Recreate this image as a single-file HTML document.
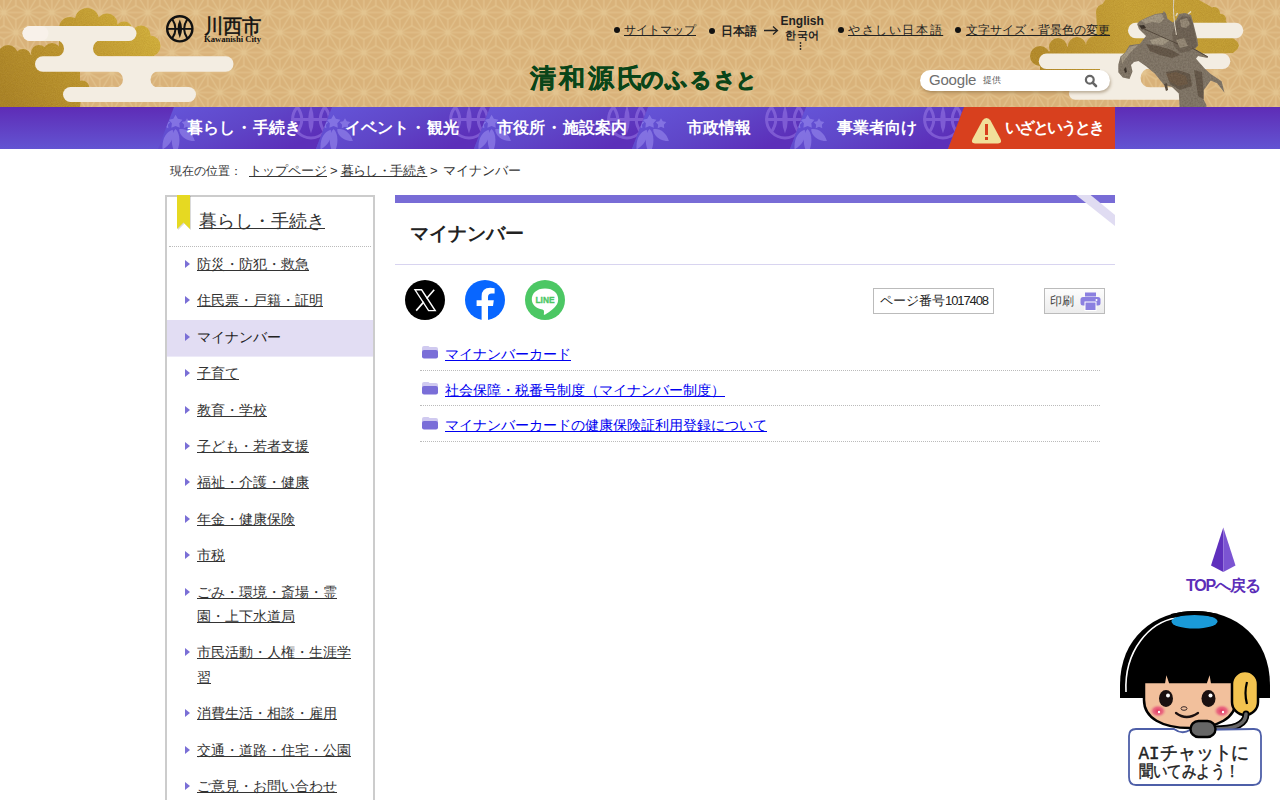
<!DOCTYPE html>
<html lang="ja"><head><meta charset="utf-8"><title>マイナンバー｜川西市</title>
<style>
*{box-sizing:border-box}
html,body{margin:0;padding:0;width:1280px;height:800px;overflow:hidden;background:#fff}
body{font-family:"Liberation Sans",sans-serif;color:#222;position:relative}
.abs{position:absolute}
a{color:inherit}
#hdr{position:absolute;left:0;top:0;width:1280px;height:107px;background:#dcb67e;overflow:hidden}
#nav{position:absolute;left:0;top:107px;width:1280px;height:42px;background:linear-gradient(180deg,#5e2cb6,#6454d2);overflow:hidden}
.ni{position:absolute;top:0;height:42px;color:#fff;font-weight:bold;font-size:16px;line-height:42px;white-space:nowrap}
#crumb{position:absolute;left:170px;top:162px;font-size:13px;line-height:18px;color:#333;white-space:nowrap}
#crumb a{color:#333}
#side{position:absolute;left:165px;top:195px;width:210px;height:640px;border:2px solid #ccc;background:#fff}
#side .ttl{position:absolute;left:32px;top:11px;font-size:18px;line-height:26px;color:#333;text-decoration:underline}
#side .rib{position:absolute;left:9px;top:-2px;width:13px;height:34px;background:#e6d820}
#side .dots{position:absolute;left:2px;right:2px;top:49px;border-top:1px dotted #bbb}
#side ul{list-style:none;margin:0;padding:0;position:absolute;left:0;top:49px;width:206px}
#side li{position:relative;padding:6px 10px 6px 30px;font-size:14px;line-height:24.4px}
#side li:before{content:"";position:absolute;left:18px;top:14px;border-left:5px solid #7a6fd6;border-top:4.5px solid transparent;border-bottom:4.5px solid transparent}
#side li a{color:#333}
#side li.cur{background:linear-gradient(to bottom,transparent 1px,#e2ddf3 1px);box-shadow:0 1.6px 0 #e2ddf3}
#main{position:absolute;left:395px;top:195px;width:720px}
.folder{position:absolute;left:27px;width:16px;height:13px}
.lk{position:absolute;left:50px;font-size:14px;line-height:20px;color:#0000f0;white-space:nowrap}
.lk a{color:#0000f0}
.dl{position:absolute;left:25px;width:680px;border-top:1px dotted #bbb}
.bul{position:absolute;width:6px;height:6px;border-radius:50%;background:#111}
.tl{position:absolute;font-size:12px;line-height:16px;color:#222;white-space:nowrap}
.tl a{color:#222}
#gsearch{position:absolute;left:920px;top:70px;width:190px;height:21px;border-radius:10.5px;background:#fff;box-shadow:1px 2px 3px rgba(90,60,20,.35)}
.glogo{position:absolute;left:9px;top:1px;font-size:15px;line-height:18px;color:#6e6e6e;letter-spacing:-0.2px}
.gtk{position:absolute;left:63px;top:4px;font-size:9px;line-height:12px;color:#555}
#pgno{left:478px;top:93px;width:121px;height:26px;border:1px solid #bbb;font-size:13px;line-height:24px;padding-left:6px;color:#222;white-space:nowrap}
#prt{left:649px;top:93px;width:61px;height:26px;border:1px solid #bbb;background:linear-gradient(#fdfdfd,#ececec);font-size:12px;line-height:24px;padding-left:5px;color:#444;white-space:nowrap}
</style></head><body>
<div id="hdr">
<svg class="abs" style="left:0;top:0" width="1280" height="107" viewBox="0 0 1280 107">
<defs>
<pattern id="asa" width="24" height="40" patternUnits="userSpaceOnUse" patternTransform="translate(3.8 2.5)">
<path d="M-24 10L0 10 M-12 -10L0 10 M-12 3.33L0 10 M-12 16.67L0 10 M-12 30L0 10 M-12 30L0 23.33 M-12 30L0 36.67 M-12 30L0 50 M-12 30L12 30 M0 -3.33L0 10 M0 10L0 23.33 M0 10L12 -10 M0 10L12 3.33 M0 10L12 16.67 M0 10L12 30 M0 10L24 10 M0 23.33L12 30 M0 36.67L0 50 M0 36.67L12 30 M0 50L12 30 M12 -10L12 3.33 M12 -10L24 10 M12 3.33L24 10 M12 16.67L12 30 M12 16.67L24 10 M12 30L12 43.33 M12 30L24 10 M12 30L24 23.33 M12 30L24 36.67 M12 30L24 50 M12 30L36 30 M24 -3.33L24 10 M24 10L24 23.33 M24 10L36 -10 M24 10L36 3.33 M24 10L36 16.67 M24 10L36 30 M24 10L48 10 M24 23.33L36 30 M24 36.67L24 50 M24 36.67L36 30 M24 50L36 30" stroke="#e3c48f" stroke-width="1.1" fill="none"/>
</pattern>
<linearGradient id="goldL" gradientUnits="userSpaceOnUse" x1="150" y1="10" x2="10" y2="107">
<stop offset="0" stop-color="#d8b843"/><stop offset="0.5" stop-color="#c49e35"/><stop offset="1" stop-color="#b08a2c"/>
</linearGradient>
<linearGradient id="gold2" gradientUnits="userSpaceOnUse" x1="1030" y1="60" x2="1240" y2="0">
<stop offset="0" stop-color="#b89030"/><stop offset="0.5" stop-color="#cca83c"/><stop offset="1" stop-color="#c6a238"/>
</linearGradient>
<filter id="grain" x="0" y="0" width="100%" height="100%">
<feTurbulence type="fractalNoise" baseFrequency="1.1" numOctaves="2" seed="3" result="n"/>
<feColorMatrix in="n" type="matrix" values="0 0 0 0 0.6  0 0 0 0 0.45  0 0 0 0 0.1  0 0 0 0.5 -0.05" result="na"/>
<feComposite in="na" in2="SourceGraphic" operator="in" result="nb"/>
<feBlend in="SourceGraphic" in2="nb" mode="multiply"/>
</filter>
<filter id="hgrain" x="1100" y="0" width="140" height="110" filterUnits="userSpaceOnUse"><feTurbulence type="fractalNoise" baseFrequency="0.6" numOctaves="2" seed="7" result="n"/><feColorMatrix in="n" type="matrix" values="0 0 0 0 0.3  0 0 0 0 0.25  0 0 0 0 0.2  0 0 0 0.6 -0.1" result="na"/><feComposite in="na" in2="SourceGraphic" operator="in" result="nb"/><feBlend in="SourceGraphic" in2="nb" mode="multiply"/></filter>
<linearGradient id="horse" x1="0" y1="0" x2="0.4" y2="1">
<stop offset="0" stop-color="#8e8172"/><stop offset="0.5" stop-color="#77695a"/><stop offset="1" stop-color="#5d5042"/>
</linearGradient>
</defs>
<rect width="1280" height="107" fill="#d9b27a"/>
<rect width="1280" height="107" fill="url(#asa)"/>
<!-- left gold cloud -->
<path fill="url(#goldL)" filter="url(#grain)" d="M75 20 a12 12 0 1 1 24 0 a12 12 0 1 1 -24 0 Z M96.5 24 a10.5 10.5 0 1 1 21.0 0 a10.5 10.5 0 1 1 -21.0 0 Z M115.5 30 a8.5 8.5 0 1 1 17.0 0 a8.5 8.5 0 1 1 -17.0 0 Z M131.5 35 a9.5 9.5 0 1 1 19.0 0 a9.5 9.5 0 1 1 -19.0 0 Z M139.5 46 a10.5 10.5 0 1 1 21.0 0 a10.5 10.5 0 1 1 -21.0 0 Z M59 28 a11 11 0 1 1 22 0 a11 11 0 1 1 -22 0 Z M-2 55 a10 10 0 1 1 20 0 a10 10 0 1 1 -20 0 Z M15 57 a8 8 0 1 1 16 0 a8 8 0 1 1 -16 0 Z M31 53 a8 8 0 1 1 16 0 a8 8 0 1 1 -16 0 Z M43 52 a9 9 0 1 1 18 0 a9 9 0 1 1 -18 0 Z M74.5 88 a7.5 7.5 0 1 1 15.0 0 a7.5 7.5 0 1 1 -15.0 0 Z M70 28 L87 20 L107 24 L124 30 L141 35 L150 46 L150 56 L59 56 L59 28 Z M0 55 L8 55 L23 57 L39 53 L52 52 L61 52 L80 72 L80 88 L82 88 L80 107 L0 107 Z"/>
<!-- left white cloud -->
<g fill="#f3ede2">
<rect x="22.5" y="26" width="114" height="15" rx="7.5"/>
<rect x="35" y="56.25" width="198.5" height="15.5" rx="7.75"/>
<rect x="63" y="87" width="133" height="15" rx="7.5"/>
<path d="M55.5 40 H101.5 A7.5 7.5 0 0 0 101.5 57 H55.5 A7.5 7.5 0 0 0 55.5 40 Z"/>
<path d="M114.5 71 H159 A7.5 7.5 0 0 0 159 88 H114.5 A7.5 7.5 0 0 0 114.5 71 Z"/>
</g>
<rect x="22.5" y="26" width="26" height="15" rx="7.5" fill="#f8f1ea"/>
<!-- right gold cloud -->
<path fill="url(#gold2)" filter="url(#grain)" d="M1030 56 a10 10 0 1 1 20 0 a10 10 0 1 1 -20 0 Z M1049 47 a9 9 0 1 1 18 0 a9 9 0 1 1 -18 0 Z M1068 46 a9 9 0 1 1 18 0 a9 9 0 1 1 -18 0 Z M1086 45 a9 9 0 1 1 18 0 a9 9 0 1 1 -18 0 Z M1096 12 a8 8 0 1 1 16 0 a8 8 0 1 1 -16 0 Z M1103 5 a6 6 0 1 1 12 0 a6 6 0 1 1 -12 0 Z M1096 28 a7 7 0 1 1 14 0 a7 7 0 1 1 -14 0 Z M1103.5 77 a7.5 7.5 0 1 1 15.0 0 a7.5 7.5 0 1 1 -15.0 0 Z M1208 13 a6 6 0 1 1 12 0 a6 6 0 1 1 -12 0 Z M1216 19 a5 5 0 1 1 10 0 a5 5 0 1 1 -10 0 Z M1111 0 L1199 0 L1208 5 L1216 10 L1223 16 L1227 23 L1227 38 L1233 38 L1237.5 42 L1239 45.5 L1237.5 49 L1233 53 L1040 60 L1040 56 L1058 47 L1077 46 L1095 45 L1097 28 L1096 12 L1104 2 Z M1040 64 L1112 64 L1118 77 L1111 86 L1040 86 Z"/>
<g fill="#f3ede2">
<rect x="1128" y="22.7" width="115.3" height="15.5" rx="7.7"/>
<rect x="1038.8" y="53.5" width="191.5" height="15.4" rx="7.7"/>
<rect x="1069" y="87.3" width="128" height="12.4" rx="6.2"/>
<path d="M1100 68 H1150.5 A9.5 9.5 0 0 0 1150.5 88 H1100 Z"/>
</g>
<!-- horse statue -->
<g filter="url(#hgrain)">
<path fill="#877c6d" d="M1137.1 24 L1139.8 21 L1147.3 17.3 L1155.5 13.9 L1163 13.1 L1163.8 10.9 L1166 13.5 L1167.5 18.8 L1172.8 22.5 L1176 20 L1179 14 L1185 13 L1191 15 L1193 22 L1197.4 39.4 L1198.2 45.5 L1195 49 L1207.9 56.5 L1207.5 58 L1198 56 L1196 58.7 L1204.9 68.8 L1210.7 73.9 L1221.6 81.2 L1224.5 92.8 L1217.2 83.3 L1210.7 80.4 L1203.5 90.6 L1203.5 99.3 L1206.4 105 L1206.4 107.5 L1179.6 107.5 L1178.8 93.5 L1172 87 L1164 85 L1155 73.8 L1146 66.3 L1138.5 61 L1134 62 L1131 65 L1132.5 71.5 L1129.5 79 L1122.8 77.5 L1118.3 72.3 L1118.3 64.8 L1120.5 56.5 L1125 52.8 L1129.5 45.3 L1140 43.8 L1146 36 L1142 32 L1139 29 Z"/>
<path fill="#a99e8a" d="M1141 20.5 L1148 17.5 L1156 14.5 L1162 14 L1164 19 L1160 23 L1152 22 L1146 24 Z M1121 57 L1126 52 L1130 46.5 L1138 45 L1131 52 L1126 58 L1122 64 Z M1150 40 L1162 37 L1170 40 L1163 45 L1152 44 Z M1186 27 L1192 25 L1195 36 L1190 38 Z"/>
<path fill="#3f362d" d="M1139 25.5 L1144 25 L1146 28 L1142 29.5 Z M1124 69 L1126 67 L1127 72 L1125 73 Z"/>
<path fill="#6a5d4e" d="M1146 44 L1158 46 L1172 50 L1180 55 L1172 58 L1160 55 L1150 51 Z M1166 72 L1178 70 L1190 74 L1192 86 L1180 90 L1170 84 Z M1194 70 L1202 72 L1203.5 90.6 L1203.5 99.3 L1198 96 L1196 82 Z"/>
<path fill="#75604a" opacity="0.8" d="M1166 74 L1176 72 L1186 76 L1188 84 L1178 86 L1170 82 Z"/>
<path fill="#74685a" d="M1176 22 L1182 16 L1190 17 L1193 24 L1196 38 L1197 46 L1190 51 L1180 53 L1174 46 L1172 34 Z"/>
<path fill="#9b8f7c" d="M1180 20 L1187 18 L1190 24 L1186 28 L1181 27 Z M1176 40 L1184 38 L1188 46 L1180 48 Z"/>
<path stroke="#e6ddcb" stroke-width="1" fill="none" d="M1173.7 0 Q1172.5 14 1176.4 35"/>
<path stroke="#574b3e" stroke-width="0.9" fill="none" d="M1142 28 L1160 36 L1178 44 M1192 48 L1208 57"/>
<path stroke="#efe7d6" stroke-width="1.4" fill="none" d="M1176 16 L1177.5 13 M1188 14 L1191 11.5"/>
<path fill="#5c5043" d="M1164 84 L1167 83 L1168 90 L1166 91 Z"/>
</g>
<!-- logo -->
<g>
<circle cx="179.8" cy="28.8" r="12.6" fill="none" stroke="#111" stroke-width="2.4"/>
<path d="M166.5 28.9 H193" stroke="#111" stroke-width="1.8"/>
<path d="M179.8 19.6 Q184.3 28.8 179.8 38 Q175.3 28.8 179.8 19.6 Z" fill="#111"/>
<path d="M172.3 19.3 Q178.6 28.8 172.3 38.3 M187.3 19.3 Q181 28.8 187.3 38.3" stroke="#111" stroke-width="2" fill="none"/>
</g>
<text x="203.5" y="32.6" font-family="Liberation Serif,serif" font-size="19.5" fill="#111" stroke="#111" stroke-width="0.5" textLength="58" lengthAdjust="spacingAndGlyphs">川西市</text>
<text x="204" y="41.5" font-family="Liberation Serif,serif" font-weight="bold" font-size="8" fill="#111" textLength="57" lengthAdjust="spacingAndGlyphs">Kawanishi City</text>
<!-- calligraphy -->
<g fill="#0a4519" stroke="#0a4519" font-family="Liberation Serif,serif" font-weight="bold">
<text x="530.3" y="87" font-size="26" stroke-width="0.3">清</text>
<text x="559.4" y="87" font-size="26" stroke-width="0.3">和</text>
<text x="588.4" y="87" font-size="26" stroke-width="0.3">源</text>
<text x="616.5" y="87" font-size="26" stroke-width="0.3">氏</text>
<text x="641" y="86.5" font-size="22" stroke-width="1">の</text>
<text x="665" y="86.5" font-size="22" stroke-width="1">ふ</text>
<text x="690" y="86.5" font-size="21" stroke-width="1">る</text>
<text x="713.5" y="86.5" font-size="20.5" stroke-width="1">さ</text>
<text x="735.5" y="86.5" font-size="20" stroke-width="1">と</text>
</g>
</svg>
<div class="bul" style="left:614px;top:27px"></div>
<div class="tl" style="left:624px;top:22px"><a href="#">サイトマップ</a></div>
<div class="bul" style="left:709px;top:28px"></div>
<div class="tl" style="left:721px;top:23px;font-weight:bold">日本語</div>
<svg class="abs" style="left:763px;top:25px" width="16" height="11" viewBox="0 0 16 11"><path d="M1 5.5 H14.5 M10 1.5 L14.5 5.5 L10 9.5" stroke="#222" stroke-width="1.3" fill="none"/></svg>
<div class="tl" style="left:780.5px;top:13px;font-weight:bold;font-size:12px">English</div>
<div class="tl" style="left:785px;top:29px;font-size:10.5px;line-height:12px;letter-spacing:0.6px;font-weight:bold">한국어</div>
<svg class="abs" style="left:799px;top:42px" width="3" height="8" viewBox="0 0 3 8"><circle cx="1.5" cy="1" r="0.9" fill="#222"/><circle cx="1.5" cy="4" r="0.9" fill="#222"/><circle cx="1.5" cy="7" r="0.9" fill="#222"/></svg>
<div class="bul" style="left:838px;top:27px"></div>
<div class="tl" style="left:848px;top:22px;letter-spacing:1.6px"><a href="#">やさしい日本語</a></div>
<div class="bul" style="left:955px;top:27px"></div>
<div class="tl" style="left:966px;top:22px"><a href="#">文字サイズ・背景色の変更</a></div>
<div id="gsearch"><span class="glogo">Google</span><span class="gtk">提供</span>
<svg class="abs" style="left:164px;top:4px" width="14" height="14" viewBox="0 0 14 14"><circle cx="5.8" cy="5.8" r="3.9" fill="none" stroke="#666" stroke-width="2.2"/><path d="M8.6 8.6 L12 12" stroke="#666" stroke-width="2.6" stroke-linecap="round"/></svg></div>
</div>
<div id="nav">
<svg class="abs" style="left:0;top:0" width="1280" height="42" viewBox="0 0 1280 42">
<defs>
<linearGradient id="nbg" x1="0" y1="0" x2="0" y2="1"><stop offset="0" stop-color="#5e2cb6"/><stop offset="1" stop-color="#6354d2"/></linearGradient>
<linearGradient id="nit" x1="0" y1="0" x2="1" y2="0.5"><stop offset="0" stop-color="#6556da"/><stop offset="0.55" stop-color="#5f46c8"/><stop offset="1" stop-color="#5c2fb9"/></linearGradient>
<g id="crest" fill="#a496f4" opacity="0.5">
<path d="M0 0 C5 5 5.2 15 0 26 C-5.2 15 -5 5 0 0 Z"/>
<path d="M0 0 C5.5 5 5.5 14 0 22 C-5.5 14 -5.5 5 0 0 Z" transform="translate(-3 0.8) rotate(27) scale(0.95 1)"/>
<path d="M0 0 C5.5 5 5.5 14 0 22 C-5.5 14 -5.5 5 0 0 Z" transform="translate(3.5 0.2) rotate(-53) scale(0.95 0.9)"/>
<path d="M0.00 -14.20 L2.29 -10.16 L6.85 -9.22 L3.71 -5.79 L4.23 -1.18 L0.00 -3.10 L-4.23 -1.18 L-3.71 -5.79 L-6.85 -9.22 L-2.29 -10.16 Z"/>
<path d="M11.40 -10.80 L13.16 -7.63 L16.73 -6.93 L14.25 -4.27 L14.69 -0.67 L11.40 -2.20 L8.11 -0.67 L8.55 -4.27 L6.07 -6.93 L9.64 -7.63 Z"/>
<path d="M-10.50 -10.80 L-8.74 -7.63 L-5.17 -6.93 L-7.65 -4.27 L-7.21 -0.67 L-10.50 -2.20 L-13.79 -0.67 L-13.35 -4.27 L-15.83 -6.93 L-12.26 -7.63 Z"/>
</g>
<g id="emb" fill="none" stroke="#9a7ae6" stroke-width="3" opacity="0.55">
<circle cx="0" cy="0" r="18.4"/>
<path d="M-19.5 0 H19.5"/>
<path d="M-14 -13 Q-4.5 0 -14 13 M14 -13 Q4.5 0 14 13"/>
<path d="M0 -14 Q5.6 0 0 14 Q-5.6 0 0 -14 Z" fill="#9a7ae6" stroke="none"/>
</g>
<clipPath id="c0"><polygon points="174,0 332,0 316,42 158,42"/></clipPath><clipPath id="c1"><polygon points="332,0 490,0 474,42 316,42"/></clipPath><clipPath id="c2"><polygon points="490,0 648,0 632,42 474,42"/></clipPath><clipPath id="c3"><polygon points="648,0 806,0 790,42 632,42"/></clipPath><clipPath id="c4"><polygon points="806,0 964,0 948,42 790,42"/></clipPath></defs>
<rect width="1280" height="42" fill="url(#nbg)"/>
<polygon points="174,0 332,0 316,42 158,42" fill="url(#nit)"/>
<g clip-path="url(#c0)"><use href="#emb" x="311" y="12.5"/><use href="#crest" x="175.6" y="22"/></g>
<polygon points="332,0 490,0 474,42 316,42" fill="url(#nit)"/>
<g clip-path="url(#c1)"><use href="#emb" x="469" y="12.5"/><use href="#crest" x="333.6" y="22"/></g>
<polygon points="490,0 648,0 632,42 474,42" fill="url(#nit)"/>
<g clip-path="url(#c2)"><use href="#emb" x="627" y="12.5"/><use href="#crest" x="491.6" y="22"/></g>
<polygon points="648,0 806,0 790,42 632,42" fill="url(#nit)"/>
<g clip-path="url(#c3)"><use href="#emb" x="785" y="12.5"/><use href="#crest" x="649.6" y="22"/></g>
<polygon points="806,0 964,0 948,42 790,42" fill="url(#nit)"/>
<g clip-path="url(#c4)"><use href="#emb" x="943" y="12.5"/><use href="#crest" x="807.6" y="22"/></g>
<polygon points="964,0 1115,0 1115,42 948,42" fill="#d8401e"/>
<path d="M986.5 11 Q984 11 982.5 13.5 L972.5 32 Q970.5 36 975 36.5 L998 36.5 Q1002.5 36 1000.5 32 L990.5 13.5 Q989 11 986.5 11 Z" fill="#f1e09a"/>
<rect x="985" y="17" width="3" height="11" fill="#d8401e"/><rect x="985" y="30" width="3" height="3" fill="#d8401e"/>
</svg>
<div class="ni" style="left:187px">暮らし<span style="margin:0 1px">・</span>手続き</div>
<div class="ni" style="left:345px">イベント<span style="margin:0 1px">・</span>観光</div>
<div class="ni" style="left:497px">市役所<span style="margin:0 1px">・</span>施設案内</div>
<div class="ni" style="left:687px">市政情報</div>
<div class="ni" style="left:837px">事業者向け</div>
<div class="ni" style="left:1005px;letter-spacing:-2px">いざというとき</div>
</div><!--navend-->

<div id="crumb"><span class="abs" style="left:0;top:0;font-size:12px">現在の位置：</span><a class="abs" style="left:79px" href="#">トップページ</a><span class="abs" style="left:160px">&gt;</span><a class="abs" style="left:170.5px;letter-spacing:-0.6px" href="#">暮らし・手続き</a><span class="abs" style="left:260px">&gt;</span><span class="abs" style="left:273px">マイナンバー</span></div>

<div id="side">
  <svg class="abs" style="left:9px;top:-2px" width="16" height="36" viewBox="0 0 16 36"><polygon points="1,0 14,0 14,34 7.5,27.5 1,34" fill="#333" opacity="0.18" transform="translate(1 1)"/><polygon points="1,0 14,0 14,34 7.5,27.5 1,34" fill="#e6d922"/></svg>
  <div class="ttl">暮らし・手続き</div>
  <div class="dots"></div>
  <ul>
    <li><a href="#">防災・防犯・救急</a></li>
    <li><a href="#">住民票・戸籍・証明</a></li>
    <li class="cur">マイナンバー</li>
    <li><a href="#">子育て</a></li>
    <li><a href="#">教育・学校</a></li>
    <li><a href="#">子ども・若者支援</a></li>
    <li><a href="#">福祉・介護・健康</a></li>
    <li><a href="#">年金・健康保険</a></li>
    <li><a href="#">市税</a></li>
    <li><a href="#">ごみ・環境・斎場・霊園・上下水道局</a></li>
    <li><a href="#">市民活動・人権・生涯学習</a></li>
    <li><a href="#">消費生活・相談・雇用</a></li>
    <li><a href="#">交通・道路・住宅・公園</a></li>
    <li><a href="#">ご意見・お問い合わせ</a></li>
  </ul>
</div>

<div id="main">
  <div class="abs" style="left:0;top:0;width:720px;height:8px;background:#786cd6"></div>
  <svg class="abs" style="left:0;top:0" width="720" height="40"><polygon points="681,0 695.6,0 720,20 720,31" fill="#e0dcf2"/></svg>
  <div class="abs" style="left:15px;top:27px;font-size:19px;line-height:24px;font-weight:bold;color:#222">マイナンバー</div>
  <div class="abs" style="left:0;top:69px;width:720px;height:1px;background:#d8d4f0"></div>
  <svg class="abs" style="left:10px;top:85px" width="40" height="40" viewBox="0 0 40 40"><circle cx="20" cy="20" r="20" fill="#000"/><path d="M10 9.8 H16.6 L30.2 30.6 H23.6 Z" fill="none" stroke="#fff" stroke-width="1.4" stroke-linejoin="miter"/><path d="M29.2 9.8 L21.6 18.6 M11.2 30.6 L18.8 21.9" stroke="#fff" stroke-width="1.6"/></svg>
  <svg class="abs" style="left:70px;top:85px" width="40" height="40" viewBox="0 0 40 40"><circle cx="20" cy="20" r="20" fill="#0866ff"/><path d="M23 40 V25.9 H28 L28.8 20.2 H23 V16.9 Q23 13.4 26.5 13.4 H29.6 V8.2 Q27.3 7.8 25.2 7.8 Q16.6 7.8 16.6 16.5 V20.2 H11.6 V25.9 H16.6 V40 Z" fill="#fff"/></svg>
  <svg class="abs" style="left:130px;top:85px" width="40" height="40" viewBox="0 0 40 40"><circle cx="20" cy="20" r="20" fill="#4cc764"/><path d="M20 8.5 C11.5 8.5 6.8 13.5 6.8 19.3 C6.8 24.5 11 28.6 17.5 29.6 Q19.5 30 19 32.5 L18.8 34.2 Q18.8 35.3 20.2 34.5 Q28.8 29.6 32 24.3 Q33.2 22 33.2 19.3 C33.2 13.5 28.5 8.5 20 8.5 Z" fill="#fff"/><text x="20" y="23.2" text-anchor="middle" font-family="Liberation Sans,sans-serif" font-weight="bold" font-size="9" fill="#4cc764" stroke="#4cc764" stroke-width="0.35" textLength="19" lengthAdjust="spacingAndGlyphs">LINE</text></svg>
  <div class="abs" id="pgno">ページ番号<span style="letter-spacing:-1.1px">1017408</span></div>
  <div class="abs" id="prt">印刷<svg class="abs" style="left:35px;top:3px" width="21" height="19" viewBox="0 0 21 19"><rect x="5" y="0.5" width="11" height="4" fill="#8b80e0"/><rect x="0.5" y="5" width="20" height="8.5" rx="2.5" fill="#8b80e0"/><rect x="5" y="10" width="11" height="8.5" fill="#8b80e0" stroke="#fff" stroke-width="1"/><circle cx="16.5" cy="8" r="1" fill="#fff"/></svg></div>
  <svg class="folder" style="top:151px" viewBox="0 0 16 13"><path d="M0 2 Q0 0 2 0 H6 Q7 0 7.5 1 H14 Q16 1 16 3 V7 H0 Z" fill="#d0caf0"/><path d="M0 6 Q0 4 2 4 H14 Q16 4 16 6 V10.5 Q16 12.5 14 12.5 H2 Q0 12.5 0 10.5 Z" fill="#7a6ed8"/></svg>
  <div class="lk" style="top:149px"><a href="#">マイナンバーカード</a></div>
  <div class="dl" style="top:175px"></div>
  <svg class="folder" style="top:187px" viewBox="0 0 16 13"><path d="M0 2 Q0 0 2 0 H6 Q7 0 7.5 1 H14 Q16 1 16 3 V7 H0 Z" fill="#d0caf0"/><path d="M0 6 Q0 4 2 4 H14 Q16 4 16 6 V10.5 Q16 12.5 14 12.5 H2 Q0 12.5 0 10.5 Z" fill="#7a6ed8"/></svg>
  <div class="lk" style="top:185px"><a href="#">社会保障・税番号制度（マイナンバー制度）</a></div>
  <div class="dl" style="top:210px"></div>
  <svg class="folder" style="top:222px" viewBox="0 0 16 13"><path d="M0 2 Q0 0 2 0 H6 Q7 0 7.5 1 H14 Q16 1 16 3 V7 H0 Z" fill="#d0caf0"/><path d="M0 6 Q0 4 2 4 H14 Q16 4 16 6 V10.5 Q16 12.5 14 12.5 H2 Q0 12.5 0 10.5 Z" fill="#7a6ed8"/></svg>
  <div class="lk" style="top:220px"><a href="#">マイナンバーカードの健康保険証利用登録について</a></div>
  <div class="dl" style="top:246px"></div>
</div>
<svg class="abs" style="left:1205px;top:522px" width="36" height="55" viewBox="0 0 36 55"><polygon points="18.3,5.5 6,43.5 18.3,50" fill="#5f30bd"/><polygon points="18.3,5.5 30.5,43.5 18.3,50" fill="#7b54d2"/></svg>
<div class="abs" style="left:1186px;top:576px;font-size:16px;line-height:20px;font-weight:bold;color:#5b2db8;white-space:nowrap;letter-spacing:-1.2px">TOPへ戻る</div>
<svg class="abs" style="left:1110px;top:600px" width="170" height="200" viewBox="0 0 170 200">
<defs><radialGradient id="chk"><stop offset="0" stop-color="#e0305c"/><stop offset="0.55" stop-color="#e85a7c" stop-opacity="0.8"/><stop offset="1" stop-color="#f2c09c" stop-opacity="0"/></radialGradient><clipPath id="hairc"><rect x="0" y="0" width="170" height="200"/></clipPath></defs>
<!-- hair -->
<path d="M10 98 L10 85 C10 38 44 11 85 11 C126 11 160 38 160 85 L160 98 Z" fill="#000"/>
<path d="M16 92 C14 50 40 22 66 18" stroke="#fff" stroke-width="1.6" fill="none"/>
<ellipse cx="84.5" cy="21.5" rx="23" ry="7" fill="#1a9ad8"/>
<path d="M61 14 Q84.5 8 108 14 L108 18 Q84.5 12 61 18 Z" fill="#000"/>
<!-- face -->
<path d="M34 82 L54 82 L56 70 L60 82 L96 82 L100 70 L102 82 L126 82 L126 100 C126 118 108 128 80 128 C52 128 34 118 34 100 Z" fill="#f2c09c" stroke="#000" stroke-width="2.5"/>
<ellipse cx="48" cy="111" rx="9" ry="7" fill="url(#chk)"/>
<ellipse cx="112" cy="111" rx="9" ry="7" fill="url(#chk)"/>
<circle cx="49" cy="112" r="1.2" fill="#fff"/><circle cx="113" cy="112" r="1.2" fill="#fff"/>
<ellipse cx="56" cy="98.5" rx="7" ry="8.5" fill="#1a1010"/>
<ellipse cx="98.5" cy="98.5" rx="7" ry="8.5" fill="#1a1010"/>
<circle cx="58" cy="95.5" r="2" fill="#fff"/><circle cx="100.5" cy="95.5" r="2" fill="#fff"/>
<ellipse cx="74" cy="108.5" rx="3" ry="1.8" fill="none" stroke="#3a2a2a" stroke-width="1"/>
<path d="M66 113 Q76.5 121 88 113" stroke="#1a1010" stroke-width="2.3" fill="none" stroke-linecap="round"/>
<!-- headset -->
<rect x="122" y="71" width="26" height="44" rx="13" fill="#f3c34f" stroke="#000" stroke-width="2.5"/>
<path d="M137 82 Q134 93 137 104" stroke="#000" stroke-width="2.2" fill="none"/>
<path d="M136 114 Q136 129 104 129" stroke="#000" stroke-width="7" fill="none" stroke-linecap="round"/><path d="M136 114 Q136 129 104 129" stroke="#666" stroke-width="3.5" fill="none" stroke-linecap="round"/>

<!-- speech box -->
<path d="M26 129 L64 129 Q72 135 80 130 L144 129 Q151 129 151 136 L151 177 Q151 185 143 185 L26 185 Q19 185 19 177 L19 136 Q19 129 26 129 Z" fill="#fff" stroke="#4e5fa8" stroke-width="1.8"/>
<rect x="80.5" y="121" width="25" height="16" rx="8" fill="#666" stroke="#000" stroke-width="2.4"/>
<text x="28.5" y="158.5" font-family="Liberation Mono,monospace" font-size="18.5" fill="#222" stroke="#222" stroke-width="0.45" textLength="111" lengthAdjust="spacingAndGlyphs">AIチャットに</text>
<text x="28.5" y="177" font-family="Liberation Sans,sans-serif" font-size="17" fill="#222" stroke="#222" stroke-width="0.45" textLength="101" lengthAdjust="spacingAndGlyphs">聞いてみよう！</text>
</svg>

</body></html>
